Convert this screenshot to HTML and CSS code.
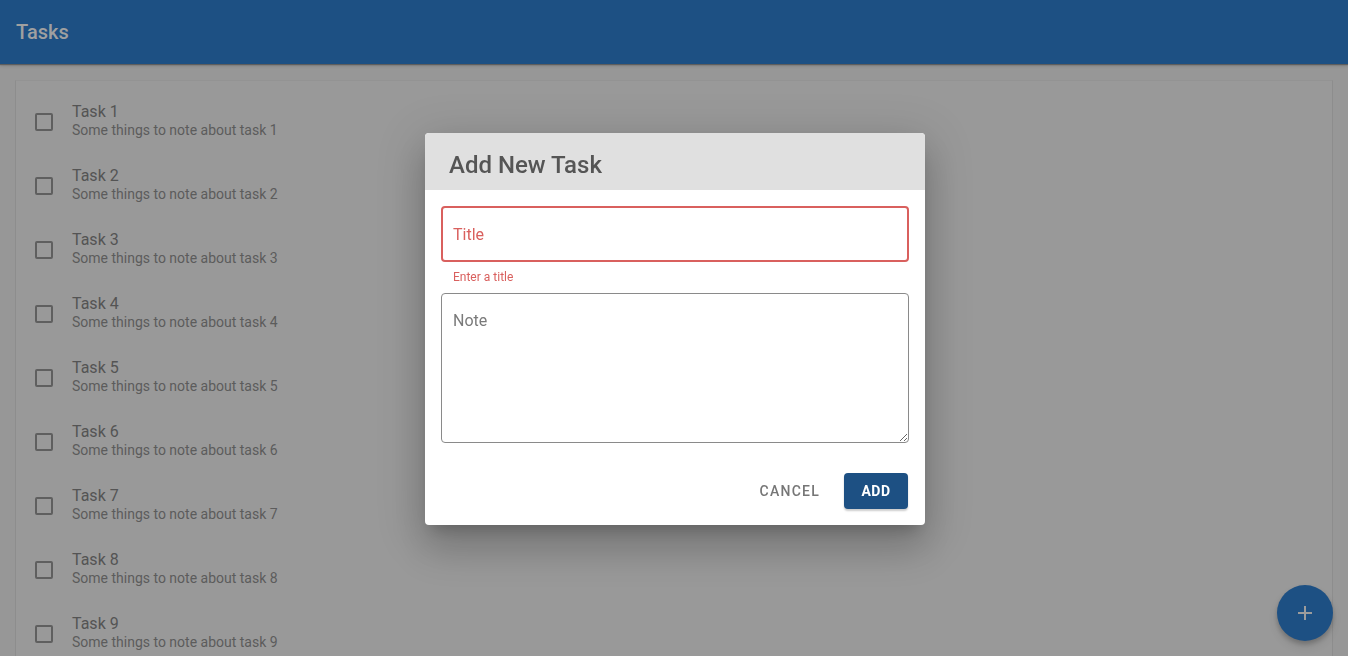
FILE: index.html
```html
<!DOCTYPE html>
<html lang="en">
<head>
<meta charset="utf-8">
<title>Tasks</title>
<link rel="stylesheet" href="styles.css">
</head>
<body>
<header class="appbar"><h1 class="appbar-title">Tasks</h1></header>
<main class="main">
  <section class="paper">
    <ul class="task-list">
      <li class="task"><span class="checkbox"></span><div class="task-text"><div class="task-title">Task 1</div><div class="task-note">Some things to note about task 1</div></div></li>
      <li class="task"><span class="checkbox"></span><div class="task-text"><div class="task-title">Task 2</div><div class="task-note">Some things to note about task 2</div></div></li>
      <li class="task"><span class="checkbox"></span><div class="task-text"><div class="task-title">Task 3</div><div class="task-note">Some things to note about task 3</div></div></li>
      <li class="task"><span class="checkbox"></span><div class="task-text"><div class="task-title">Task 4</div><div class="task-note">Some things to note about task 4</div></div></li>
      <li class="task"><span class="checkbox"></span><div class="task-text"><div class="task-title">Task 5</div><div class="task-note">Some things to note about task 5</div></div></li>
      <li class="task"><span class="checkbox"></span><div class="task-text"><div class="task-title">Task 6</div><div class="task-note">Some things to note about task 6</div></div></li>
      <li class="task"><span class="checkbox"></span><div class="task-text"><div class="task-title">Task 7</div><div class="task-note">Some things to note about task 7</div></div></li>
      <li class="task"><span class="checkbox"></span><div class="task-text"><div class="task-title">Task 8</div><div class="task-note">Some things to note about task 8</div></div></li>
      <li class="task"><span class="checkbox"></span><div class="task-text"><div class="task-title">Task 9</div><div class="task-note">Some things to note about task 9</div></div></li>
    </ul>
  </section>
</main>
<button class="fab" aria-label="Add task">
  <svg width="14" height="14" viewBox="0 0 14 14"><path d="M7 0v14M0 7h14" stroke="#9c9c9c" stroke-width="2"/></svg>
</button>
<div class="overlay">
  <div class="dialog">
    <div class="dialog-header"><h2 class="dialog-title">Add New Task</h2></div>
    <div class="dialog-body">
      <div class="field field-error"><span class="field-label">Title</span></div>
      <div class="helper">Enter a title</div>
      <textarea class="note" placeholder="Note"></textarea>
    </div>
    <div class="dialog-actions">
      <button class="btn btn-text">Cancel</button>
      <button class="btn btn-primary">Add</button>
    </div>
  </div>
</div>
</body>
</html>
```

FILE: styles.css
```css
* { box-sizing: border-box; }
html, body { margin: 0; height: 100%; }
body {
  font-family: Roboto, "Noto Sans", "Liberation Sans", sans-serif;
  background: #979797;
  overflow: hidden;
}
.appbar {
  height: 64px;
  background: #1d5083;
  display: flex;
  align-items: center;
  padding: 0 16px;
  box-shadow: 0 1px 1px #5e5e5e, 0 2px 3px rgba(0,0,0,0.15);
  position: relative;
  z-index: 1;
}
.appbar-title {
  margin: 0;
  font-size: 20px;
  font-weight: 500;
  color: #a0a0a0;
}
.main { padding: 16px 15px 0 15px; }
.paper {
  background: #999999;
  border-left: 1px solid #8d8d8d;
  border-right: 1px solid #8d8d8d;
  border-top: 1px solid #939393;
}
.task-list { list-style: none; margin: 0; padding: 8px 0 0 0; }
.task {
  height: 64px;
  display: flex;
  align-items: center;
  padding-left: 19px;
}
.checkbox {
  width: 18px;
  height: 18px;
  border: 2px solid #5f5f5f;
  border-radius: 2px;
  margin-top: 1px;
  flex: none;
}
.task-text { margin-left: 19px; margin-bottom: 2px; }
.task-title { font-size: 16px; line-height: 20px; color: #545454; }
.task-note { font-size: 14px; line-height: 18px; color: #5c5c5c; margin-top: -1px; }
.fab {
  position: fixed;
  right: 15px;
  bottom: 15px;
  width: 56px;
  height: 56px;
  border-radius: 50%;
  border: none;
  background: #1d5083;
  display: flex;
  align-items: center;
  justify-content: center;
  box-shadow: 0 3px 5px rgba(0,0,0,0.2), 0 6px 10px rgba(0,0,0,0.1);
  padding: 0;
}
.overlay {
  position: fixed;
  inset: 0;
  padding: 2px 0 0 2px;
  display: flex;
  align-items: center;
  justify-content: center;
  z-index: 10;
}
.dialog {
  width: 500px;
  background: #fff;
  border-radius: 4px;
  overflow: hidden;
  box-shadow: 0 11px 15px -7px rgba(0,0,0,0.2), 0 24px 38px 3px rgba(0,0,0,0.14), 0 9px 46px 8px rgba(0,0,0,0.12);
}
.dialog-header {
  height: 57px;
  background: #e0e0e0;
  display: flex;
  align-items: center;
  padding-left: 24px;
}
.dialog-title {
  margin: 6px 0 0 0;
  font-size: 24px;
  font-weight: 500;
  color: #555555;
}
.dialog-body { padding: 16px 16px 0 16px; display: flex; flex-direction: column; }
.field {
  height: 56px;
  border-radius: 4px;
  display: flex;
  align-items: center;
  padding-left: 10px;
}
.field-error { border: 2px solid #d9605e; }
.field-label { font-size: 16px; color: #d9605e; }
.helper {
  margin: 7px 0 0 12px;
  font-size: 12px;
  line-height: 16px;
  color: #d9605e;
}
.note {
  margin-top: 8px;
  height: 150px;
  border: 1px solid #8a8a8a;
  border-radius: 4px;
  padding: 17px 11px;
  font-family: inherit;
  font-size: 16px;
  line-height: 19px;
  resize: vertical;
  outline: none;
}
.note::placeholder { color: #7a7a7a; }
.dialog-actions {
  display: flex;
  justify-content: flex-end;
  align-items: center;
  gap: 16px;
  padding: 30px 17px 16px 16px;
}
.btn {
  font-family: inherit;
  font-size: 14px;
  font-weight: 500;
  text-transform: uppercase;
  letter-spacing: 1.25px;
  height: 36px;
  border: none;
  border-radius: 4px;
  cursor: pointer;
}
.btn-text { background: transparent; color: #767676; padding: 0 8px; }
.btn-primary {
  background: #1d5083;
  color: #fff;
  font-weight: 700;
  letter-spacing: 0.5px;
  width: 64px;
  padding: 0;
  box-shadow: 0 2px 2px rgba(0,0,0,0.2);
}
```
